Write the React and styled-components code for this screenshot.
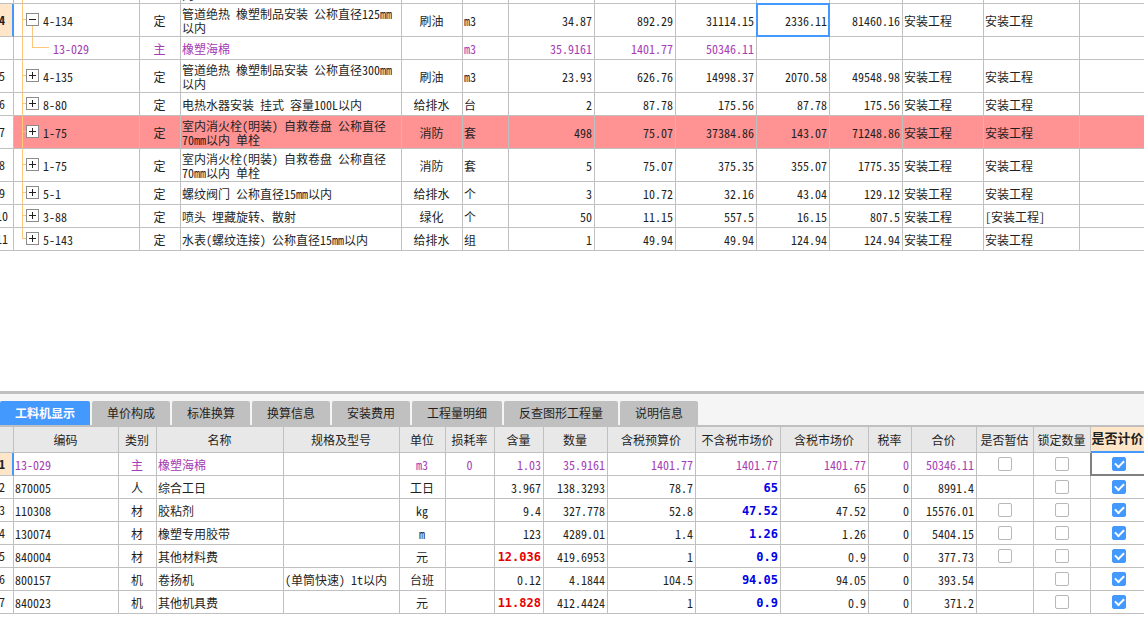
import { useState } from "react";
import styled, { createGlobalStyle, css } from "styled-components";

const colors = {
  text: "#1f1f1f",
  purple: "#a63cb4",
  line: "#c0c0c0",
  head: "#e8e8e8",
  bar: "#f5f5f5",
  blue: "#4499ff",
  current: "#ffe6c8",
  danger: "#ff9292",
  tree: "#ffc878",
};

const GlobalStyle = createGlobalStyle`
  *, *::before, *::after {
    box-sizing: border-box;
  }
  body {
    margin: 0;
    background: #fff;
    color: ${colors.text};
    font-family: "Noto Sans Mono CJK SC", "Noto Sans CJK SC", monospace;
    font-size: 12px;
    line-height: 14px;
  }
`;

const Page = styled.main`
  display: flex;
  flex-direction: column;
  min-height: 100vh;
  overflow: hidden;
`;

const ListPane = styled.section`
  flex: 1;
  overflow: hidden;
`;

const DetailPane = styled.section`
  border-top: 3px solid ${colors.line};
  padding-bottom: 6px;
  overflow: hidden;
`;

const Table = styled.table`
  width: 100%;
  table-layout: fixed;
  border-collapse: separate;
  border-spacing: 0;
`;

// the list is scrolled down: only the bottom edge of its first row shows
const ListTable = styled(Table)`
  margin-top: -29px;

  td:last-child {
    border-right: 0;
  }
`;

const DetailTable = styled(Table)`
  width: calc(100% + 4px);
`;

const Row = styled.tr`
  height: ${({ $tall }) => ($tall ? 33 : 23)}px;
  color: ${({ $main }) => ($main ? colors.purple : "inherit")};
  background-color: ${({ $danger }) => ($danger ? colors.danger : "#fff")};
`;

const Cell = styled.td`
  padding: 2px 2px 0 1px;
  border-right: 1px solid ${colors.line};
  border-bottom: 1px solid ${colors.line};
  text-align: ${({ $align }) => $align || "left"};
  vertical-align: middle;
  overflow: hidden;
`;

const PriceCell = styled(Cell)`
  ${({ $mark }) =>
    $mark &&
    css`
      color: ${$mark};
      font-family: "DejaVu Sans Mono", monospace;
      font-weight: 700;
    `}
`;

const FocusCell = styled(Cell)`
  position: relative;
  overflow: visible;

  &::after {
    content: "";
    position: absolute;
    inset: -1px;
    border: 2px solid ${colors.blue};
    pointer-events: none;
  }
`;

const CheckCell = styled(Cell)`
  padding: 0;
  text-align: center;
`;

const FocusCheckCell = styled(FocusCell)`
  padding: 0;
  text-align: center;

  &::after {
    top: 0;
    border-color: #808080;
    border-top: 0;
  }
`;

const IndexCell = styled.th`
  padding: 0 0 1px;
  border-right: 1px solid ${colors.line};
  border-bottom: 1px solid ${colors.line};
  background: #fff;
  color: ${colors.text};
  font-weight: 400;
  overflow: hidden;

  ${({ $current }) =>
    $current &&
    css`
      background: ${colors.current};
      border-right: 2px solid ${colors.blue};
      font-weight: 700;
    `}
`;

const IndexText = styled.div`
  width: 22px;
  margin-left: -9px;
  text-align: center;
`;

const stroke = `linear-gradient(${colors.tree}, ${colors.tree})`;
const middle = "calc(50% - 1px)";

const branches = {
  open: `${stroke} 8px 0 / 1px 100%, ${stroke} 8px ${middle} / 6px 1px, ${stroke} 18px 100% / 1px 50%`,
  closed: `${stroke} 8px 0 / 1px 100%, ${stroke} 8px ${middle} / 6px 1px`,
  last: `${stroke} 8px 0 / 1px ${middle}, ${stroke} 8px ${middle} / 6px 1px`,
  child: `${stroke} 8px 0 / 1px 100%, ${stroke} 18px 0 / 1px ${middle}, ${stroke} 18px ${middle} / 17px 1px`,
};

const TreeCell = styled(Cell)`
  padding: 0 0 2px;
  ${({ $branch }) =>
    $branch &&
    css`
      background: ${branches[$branch]};
      background-repeat: no-repeat;
    `}
`;

const TreeNode = styled.div`
  display: flex;
  align-items: center;
  gap: 4px;
  padding-left: ${({ $child }) => ($child ? 39 : 12)}px;
`;

const TreeLabel = styled.span`
  padding-top: 4px;
`;

const Expander = styled.button`
  display: flex;
  align-items: center;
  justify-content: center;
  width: 13px;
  height: 13px;
  padding: 0;
  border: 1px solid #8c8c8c;
  background: #fff;
  cursor: pointer;
`;

const TabBar = styled.div`
  display: flex;
  gap: 2px;
  padding-top: 7px;
  background: ${colors.bar};
  border-bottom: 2px solid ${colors.line};
`;

const Tab = styled.button`
  height: 24px;
  padding: 0 15px;
  border: 0;
  border-radius: 2px 2px 0 0;
  background: ${({ $active }) => ($active ? colors.blue : colors.line)};
  color: ${({ $active }) => ($active ? "#fff" : colors.text)};
  font: inherit;
  font-weight: ${({ $active }) => ($active ? 700 : 400)};
  white-space: nowrap;
  cursor: pointer;
`;

const HeadCell = styled.th`
  height: 26px;
  padding: 0 1px 0 0;
  border-right: 1px solid ${colors.line};
  border-bottom: 1px solid ${colors.line};
  background: ${colors.head};
  font-weight: 400;
  white-space: nowrap;
  overflow: hidden;

  ${({ $current }) =>
    $current &&
    css`
      padding: 0 3px 2px 0;
      background: ${colors.current};
      border-bottom: 2px solid ${colors.blue};
      font-size: 13px;
      font-weight: 700;
    `}
`;

const Checkbox = styled.input`
  appearance: none;
  position: relative;
  display: block;
  width: 14px;
  height: 14px;
  margin: 0 auto;
  border: 1px solid #b8b8b8;
  border-radius: 2px;
  background: #fff;

  &:checked {
    border-color: ${colors.blue};
    background: ${colors.blue};
  }

  &:checked::after {
    content: "";
    position: absolute;
    left: 2px;
    top: 2px;
    width: 9px;
    height: 6px;
    border-left: 2px solid #fff;
    border-bottom: 2px solid #fff;
    transform: rotate(-45deg);
  }
`;

const listWidths = [14, 126, 41, null, 61, 46, 86, 81, 81, 73, 73, 81, 96, 64];

const listRows = [
  { no: "", branch: "closed", name: "管道绝热 橡塑制品安装 公称直径80mm以内", nums: ["", "", "", "", ""], tall: true },
  { no: "4", branch: "open", code: "4-134", type: "定", name: "管道绝热 橡塑制品安装 公称直径125mm以内", major: "刷油", unit: "m3", nums: ["34.87", "892.29", "31114.15", "2336.11", "81460.16"], fee: "安装工程", work: "安装工程", tall: true, current: true },
  { no: "", branch: "child", code: "13-029", type: "主", name: "橡塑海棉", major: "", unit: "m3", nums: ["35.9161", "1401.77", "50346.11", "", ""], fee: "", work: "" },
  { no: "5", branch: "closed", code: "4-135", type: "定", name: "管道绝热 橡塑制品安装 公称直径300mm以内", major: "刷油", unit: "m3", nums: ["23.93", "626.76", "14998.37", "2070.58", "49548.98"], fee: "安装工程", work: "安装工程", tall: true },
  { no: "6", branch: "closed", code: "8-80", type: "定", name: "电热水器安装 挂式 容量100L以内", major: "给排水", unit: "台", nums: ["2", "87.78", "175.56", "87.78", "175.56"], fee: "安装工程", work: "安装工程" },
  { no: "7", branch: "closed", code: "1-75", type: "定", name: "室内消火栓(明装) 自救卷盘 公称直径70mm以内 单栓", major: "消防", unit: "套", nums: ["498", "75.07", "37384.86", "143.07", "71248.86"], fee: "安装工程", work: "安装工程", tall: true, danger: true },
  { no: "8", branch: "closed", code: "1-75", type: "定", name: "室内消火栓(明装) 自救卷盘 公称直径70mm以内 单栓", major: "消防", unit: "套", nums: ["5", "75.07", "375.35", "355.07", "1775.35"], fee: "安装工程", work: "安装工程", tall: true },
  { no: "9", branch: "closed", code: "5-1", type: "定", name: "螺纹阀门 公称直径15mm以内", major: "给排水", unit: "个", nums: ["3", "10.72", "32.16", "43.04", "129.12"], fee: "安装工程", work: "安装工程" },
  { no: "10", branch: "closed", code: "3-88", type: "定", name: "喷头 埋藏旋转、散射", major: "绿化", unit: "个", nums: ["50", "11.15", "557.5", "16.15", "807.5"], fee: "安装工程", work: "[安装工程]" },
  { no: "11", branch: "last", code: "5-143", type: "定", name: "水表(螺纹连接) 公称直径15mm以内", major: "给排水", unit: "组", nums: ["1", "49.94", "49.94", "124.94", "124.94"], fee: "安装工程", work: "安装工程" },
];

const tabs = ["工料机显示", "单价构成", "标准换算", "换算信息", "安装费用", "工程量明细", "反查图形工程量", "说明信息"];

const detailColumns = [
  ["", 14],
  ["编码", 105],
  ["类别", 38],
  ["名称", 127],
  ["规格及型号", null],
  ["单位", 46],
  ["损耗率", 49],
  ["含量", 49],
  ["数量", 64],
  ["含税预算价", 88],
  ["不含税市场价", 85],
  ["含税市场价", 88],
  ["税率", 43],
  ["合价", 65],
  ["是否暂估", 57],
  ["锁定数量", 57],
  ["是否计价", 57],
];

const detailRows = [
  { code: "13-029", type: "主", name: "橡塑海棉", spec: "", unit: "m3", loss: "0", content: "1.03", qty: "35.9161", budget: "1401.77", net: "1401.77", market: "1401.77", total: "50346.11", estimate: true, current: true },
  { code: "870005", type: "人", name: "综合工日", spec: "", unit: "工日", content: "3.967", qty: "138.3293", budget: "78.7", net: "65", netChanged: true, market: "65", total: "8991.4" },
  { code: "110308", type: "材", name: "胶粘剂", spec: "", unit: "kg", content: "9.4", qty: "327.778", budget: "52.8", net: "47.52", netChanged: true, market: "47.52", total: "15576.01", estimate: true },
  { code: "130074", type: "材", name: "橡塑专用胶带", spec: "", unit: "m", content: "123", qty: "4289.01", budget: "1.4", net: "1.26", netChanged: true, market: "1.26", total: "5404.15", estimate: true },
  { code: "840004", type: "材", name: "其他材料费", spec: "", unit: "元", content: "12.036", contentChanged: true, qty: "419.6953", budget: "1", net: "0.9", netChanged: true, market: "0.9", total: "377.73", estimate: true },
  { code: "800157", type: "机", name: "卷扬机", spec: "(单筒快速) 1t以内", unit: "台班", content: "0.12", qty: "4.1844", budget: "104.5", net: "94.05", netChanged: true, market: "94.05", total: "393.54" },
  { code: "840023", type: "机", name: "其他机具费", spec: "", unit: "元", content: "11.828", contentChanged: true, qty: "412.4424", budget: "1", net: "0.9", netChanged: true, market: "0.9", total: "371.2" },
];

function ExpandButton({ open, labelId }) {
  return (
    <Expander type="button" aria-expanded={open} aria-labelledby={labelId}>
      <svg width="7" height="7" viewBox="0 0 7 7" shapeRendering="crispEdges">
        <path d={open ? "M0 3.5H7" : "M0 3.5H7M3.5 0V7"} stroke="#1f1f1f" fill="none" />
      </svg>
    </Expander>
  );
}

function ListRow({ row, idx }) {
  const isChild = row.branch === "child";
  const labelId = `item-${idx}`;

  return (
    <Row $tall={row.tall} $main={isChild} $danger={row.danger}>
      <IndexCell scope="row" $current={row.current}>
        <IndexText>{row.no}</IndexText>
      </IndexCell>
      <TreeCell $branch={row.branch}>
        {row.code && (
          <TreeNode $child={isChild}>
            {!isChild && <ExpandButton open={row.branch === "open"} labelId={labelId} />}
            <TreeLabel id={labelId}>{row.code}</TreeLabel>
          </TreeNode>
        )}
      </TreeCell>
      <Cell $align="center">{row.type}</Cell>
      <Cell>{row.name}</Cell>
      <Cell $align="center">{row.major}</Cell>
      <Cell>{row.unit}</Cell>
      {row.nums.map((num, i) => {
        const NumCell = row.current && i === 3 ? FocusCell : Cell;
        return (
          <NumCell key={i} $align="right">
            {num}
          </NumCell>
        );
      })}
      <Cell>{row.fee}</Cell>
      <Cell>{row.work}</Cell>
      <Cell />
    </Row>
  );
}

function DetailRow({ row, idx, priced, onToggle }) {
  const PricedCell = row.current ? FocusCheckCell : CheckCell;
  const codeId = `code-${idx}`;

  return (
    <Row $main={row.type === "主"}>
      <IndexCell scope="row" $current={row.current}>
        <IndexText>{idx + 1}</IndexText>
      </IndexCell>
      <Cell id={codeId}>{row.code}</Cell>
      <Cell $align="center">{row.type}</Cell>
      <Cell>{row.name}</Cell>
      <Cell>{row.spec}</Cell>
      <Cell $align="center">{row.unit}</Cell>
      <Cell $align="center">{row.loss}</Cell>
      <PriceCell $align="right" $mark={row.contentChanged && "#e60000"}>
        {row.content}
      </PriceCell>
      <Cell $align="right">{row.qty}</Cell>
      <Cell $align="right">{row.budget}</Cell>
      <PriceCell $align="right" $mark={row.netChanged && "#0000e6"}>
        {row.net}
      </PriceCell>
      <Cell $align="right">{row.market}</Cell>
      <Cell $align="right">0</Cell>
      <Cell $align="right">{row.total}</Cell>
      <CheckCell>
        {row.estimate && <Checkbox type="checkbox" aria-labelledby={`col-14 ${codeId}`} />}
      </CheckCell>
      <CheckCell>
        <Checkbox type="checkbox" aria-labelledby={`col-15 ${codeId}`} />
      </CheckCell>
      <PricedCell>
        <Checkbox
          type="checkbox"
          aria-labelledby={`col-16 ${codeId}`}
          checked={priced}
          onChange={() => onToggle(idx)}
        />
      </PricedCell>
    </Row>
  );
}

export default function App() {
  const [activeTab, setActiveTab] = useState(0);
  const [priced, setPriced] = useState(detailRows.map(() => true));

  const togglePriced = (idx) => {
    setPriced((prev) => prev.map((value, i) => (i === idx ? !value : value)));
  };

  return (
    <>
      <GlobalStyle />
      <Page>
        <ListPane>
          <ListTable>
            <colgroup>
              {listWidths.map((width, i) => (
                <col key={i} width={width ?? undefined} />
              ))}
            </colgroup>
            <tbody>
              {listRows.map((row, idx) => (
                <ListRow key={idx} row={row} idx={idx} />
              ))}
            </tbody>
          </ListTable>
        </ListPane>
        <DetailPane>
          <TabBar role="tablist">
            {tabs.map((tab, i) => (
              <Tab
                key={tab}
                type="button"
                role="tab"
                aria-selected={i === activeTab}
                $active={i === activeTab}
                onClick={() => setActiveTab(i)}
              >
                {tab}
              </Tab>
            ))}
          </TabBar>
          <DetailTable>
            <colgroup>
              {detailColumns.map(([title, width]) => (
                <col key={title} width={width ?? undefined} />
              ))}
            </colgroup>
            <thead>
              <tr>
                {detailColumns.map(([title], i) => (
                  <HeadCell key={title} id={`col-${i}`} scope="col" $current={i === 16}>
                    {title}
                  </HeadCell>
                ))}
              </tr>
            </thead>
            <tbody>
              {detailRows.map((row, idx) => (
                <DetailRow
                  key={row.code}
                  row={row}
                  idx={idx}
                  priced={priced[idx]}
                  onToggle={togglePriced}
                />
              ))}
            </tbody>
          </DetailTable>
        </DetailPane>
      </Page>
    </>
  );
}
